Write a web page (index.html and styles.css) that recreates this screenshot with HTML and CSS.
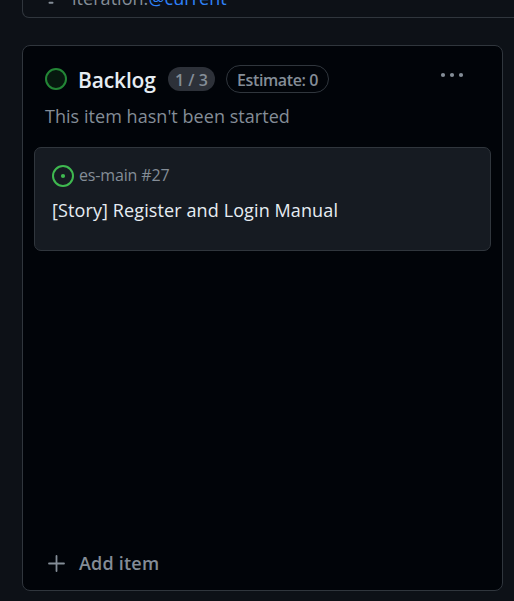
FILE: index.html
```
<!DOCTYPE html>
<html lang="en">
<head>
<meta charset="utf-8">
<title>Backlog</title>
<link rel="stylesheet" href="styles.css">
</head>
<body>
<div class="filter">
  <svg class="filter-icon" width="20" height="20" viewBox="0 0 16 16"><path d="M.75 3h14.5a.75.75 0 0 1 0 1.500H.75a.75.75 0 0 1 0-1.500ZM3 7.750A.75.75 0 0 1 3.750 7h8.500a.75.75 0 0 1 0 1.500h-8.500A.75.75 0 0 1 3 7.750Zm3 4a.75.75 0 0 1 .75-.75h2.500a.75.75 0 0 1 0 1.500h-2.500a.75.75 0 0 1-.75-.75Z"/></svg>
  <span class="query">iteration:<span class="value">@current</span></span>
</div>
<section class="column">
  <header class="head">
    <span class="status"></span>
    <h2 class="title">Backlog</h2>
    <span class="count"><span class="count-text">1 / 3</span></span>
    <span class="estimate"><span class="estimate-text">Estimate: 0</span></span>
    <svg class="more" width="24" height="6" viewBox="0 0 24 6"><circle cx="3" cy="3" r="2.100"/><circle cx="12" cy="3" r="2.100"/><circle cx="21" cy="3" r="2.100"/></svg>
  </header>
  <p class="desc"><span class="desc-text">This item hasn't been started</span></p>
  <article class="card">
    <div class="meta">
      <svg width="22" height="22" viewBox="0 0 22 22"><circle class="ring" cx="11" cy="11" r="10"/><circle class="dot" cx="11" cy="11" r="2.100"/></svg>
      <span class="repo">es-main #27</span>
    </div>
    <div class="name"><span class="name-text">[Story] Register and Login Manual</span></div>
  </article>
  <footer class="add">
    <svg width="18" height="18" viewBox="0 0 18 18"><path d="M9.500 2v15M2 9.500h15"/></svg>
    <span class="add-text">Add item</span>
  </footer>
</section>
</body>
</html>
```
FILE: styles.css
```
* { box-sizing: border-box; }
body {
  margin: 0;
  height: 601px;
  overflow: hidden;
  background: #0d1117;
  color: #848d97;
  font-family: "Open Sans", "Noto Sans", sans-serif;
  font-size: 18px;
  white-space: nowrap;
}
.filter {
  display: flex;
  align-items: flex-end;
  height: 18px;
  margin: 0 -10px 27px 22px;
  padding: 0 0 7px 18px;
  border: 1px solid #30363d;
  border-top: 0;
  border-radius: 0 0 7px 7px;
}
.filter-icon { flex: none; margin-bottom: 2px; fill: #848d97; }
.query { margin-left: 11px; line-height: 24px; letter-spacing: 0.04px; }
.value { color: #2f81f7; }
.column {
  display: flex;
  flex-direction: column;
  width: 481px;
  height: 546px;
  margin-left: 22px;
  padding: 19px 11px 13px;
  background: #010409;
  border: 1px solid #30363d;
  border-radius: 8px;
}
.head { display: flex; align-items: center; height: 28px; padding: 0 27px 0 11px; }
.status { width: 22px; height: 22px; border: 2px solid #238636; border-radius: 50%; background: #07190f; }
.title { width: 79px; margin: 0 11px; padding-top: 2px; font-size: 21px; line-height: 28px; font-weight: 600; letter-spacing: -0.15px; color: #e6edf3; }
.count, .estimate { display: flex; align-items: center; justify-content: center; padding-top: 2px; font-size: 16px; font-weight: 600; }
.count { width: 47px; height: 24px; border-radius: 12px; background: #2d3139; }
.estimate { width: 103px; height: 28px; margin-left: 11px; border: 1px solid #30363d; border-radius: 14px; letter-spacing: -0.4px; }
.more { margin: -8px 0 0 auto; fill: #848d97; }
.desc { margin: 10px 0 0 11px; line-height: 26px; letter-spacing: 0.04px; }
.card {
  height: 104px;
  margin-top: 18px;
  padding: 17px;
  background: #161b22;
  border: 1px solid #30363d;
  border-radius: 7px;
}
.meta { display: flex; align-items: center; height: 22px; gap: 5px; font-size: 16px; letter-spacing: -0.15px; }
.repo { padding-bottom: 2px; }
.ring { fill: none; stroke: #3fb950; stroke-width: 2; }
.dot { fill: #3fb950; }
.name { margin-top: 10px; line-height: 26px; letter-spacing: 0.11px; color: #e6edf3; }
.add { display: flex; align-items: center; height: 28px; margin-top: auto; padding-left: 13px; gap: 14px; font-weight: 600; letter-spacing: 0.2px; }
.add path { fill: none; stroke: #848d97; stroke-width: 1.800; stroke-linecap: round; }
```
